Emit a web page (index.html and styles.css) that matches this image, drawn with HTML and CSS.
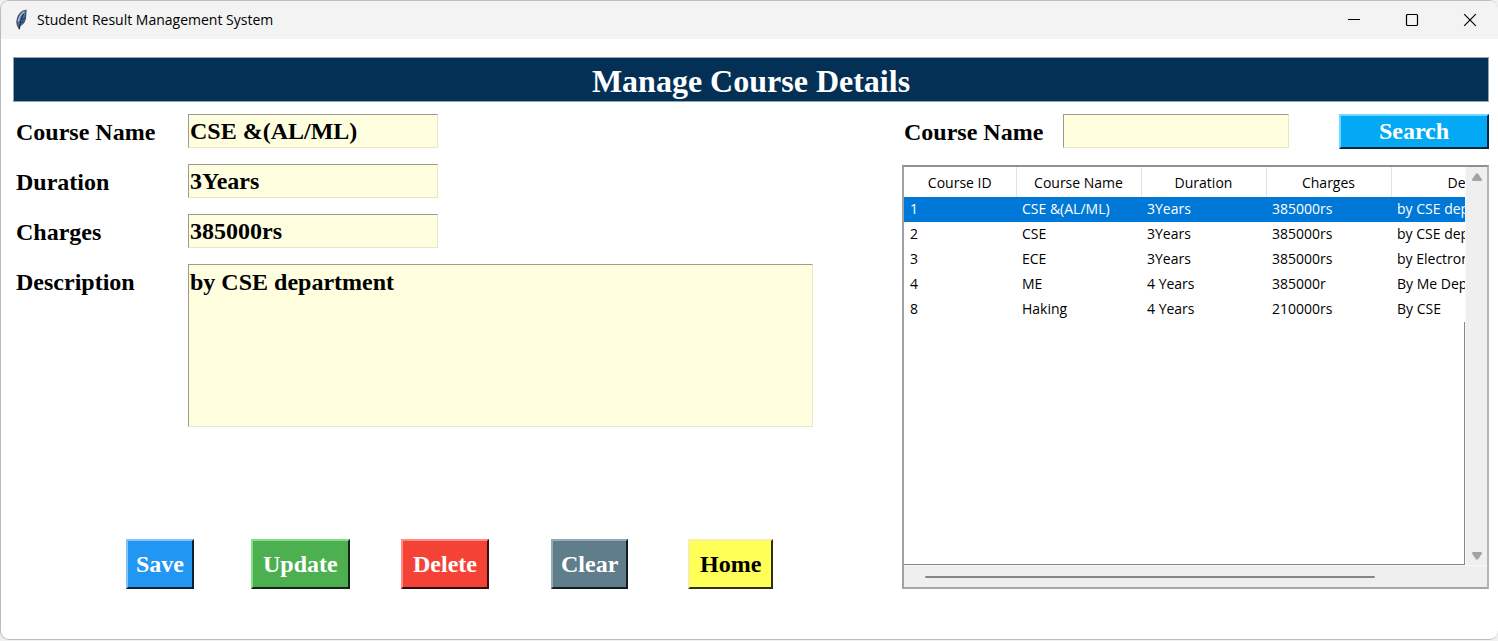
FILE: index.html
```html
<!DOCTYPE html>
<html lang="en">
<head>
<meta charset="utf-8">
<title>Student Result Management System</title>
<link rel="stylesheet" href="styles.css">
</head>
<body>
<div class="window">
  <header class="titlebar">
    <svg class="feather" viewBox="0 0 14 22" aria-hidden="true">
      <path d="M12 1.400C8 2 5 5 3.600 9c-1 3-1 5-.2 7.200L5.200 19.500 6.200 16.500c3-1.500 5-4.500 5.300-8z" fill="#3f76b8" stroke="#4a4f58" stroke-width="1.200"/>
      <path d="M10.500 2.800C7.200 4.500 5 8 4.400 12.500" fill="none" stroke="#b4cde8" stroke-width="1.200"/>
      <path d="M9.500 5C7.500 9 6 13 5.200 20M11 8.500L8 11M9.500 12L6.800 14" fill="none" stroke="#1d232c" stroke-width="1"/>
    </svg>
    <span class="caption">Student Result Management System</span>
    <div class="controls">
      <button class="control" type="button" aria-label="Minimize"><svg viewBox="0 0 14 14"><path d="M1 6.500h12"/></svg></button>
      <button class="control" type="button" aria-label="Maximize"><svg viewBox="0 0 14 14"><rect x="1.500" y="1.500" width="11" height="11" rx="1"/></svg></button>
      <button class="control" type="button" aria-label="Close"><svg viewBox="0 0 14 14"><path d="M1.200 1.200l11.600 11.600M12.800 1.200L1.200 12.800"/></svg></button>
    </div>
  </header>
  <h1 class="banner">Manage Course Details</h1>
  <main class="content">
    <form class="editor">
      <div class="fields">
        <label for="name">Course Name</label>
        <input class="entry" id="name" type="text" value="CSE &amp;(AL/ML)">
        <label for="duration">Duration</label>
        <input class="entry" id="duration" type="text" value="3Years">
        <label for="charges">Charges</label>
        <input class="entry" id="charges" type="text" value="385000rs">
        <label for="description">Description</label>
        <textarea class="entry notes" id="description">by CSE department</textarea>
      </div>
      <div class="actions">
        <button class="btn save" type="button">Save</button>
        <button class="btn wide update" type="button">Update</button>
        <button class="btn wide delete" type="button">Delete</button>
        <button class="btn clear" type="button">Clear</button>
        <button class="btn wide home" type="button">Home</button>
      </div>
    </form>
    <section class="browser">
      <form class="search">
        <label for="query">Course Name</label>
        <input class="entry" id="query" type="text">
        <button class="btn find" type="button">Search</button>
      </form>
      <div class="panel">
        <div class="view">
          <table class="courses">
            <colgroup><col class="col-id"><col class="col"><col class="col"><col class="col"><col class="col-wide"></colgroup>
            <thead><tr><th>Course ID</th><th>Course Name</th><th>Duration</th><th>Charges</th><th>Description</th></tr></thead>
            <tbody>
              <tr class="selected"><td>1</td><td>CSE &amp;(AL/ML)</td><td>3Years</td><td>385000rs</td><td>by CSE department</td></tr>
              <tr><td>2</td><td>CSE</td><td>3Years</td><td>385000rs</td><td>by CSE department</td></tr>
              <tr><td>3</td><td>ECE</td><td>3Years</td><td>385000rs</td><td>by Electronics</td></tr>
              <tr><td>4</td><td>ME</td><td>4 Years</td><td>385000r</td><td>By Me Department</td></tr>
              <tr><td>8</td><td>Haking</td><td>4 Years</td><td>210000rs</td><td>By CSE</td></tr>
            </tbody>
          </table>
          <div class="blank"></div>
        </div>
        <div class="vbar">
          <svg viewBox="0 0 12 8" aria-hidden="true"><path d="M5 .5h2L11 6.500 10.500 8h-9L1 6.500z"/></svg>
          <svg viewBox="0 0 12 8" aria-hidden="true"><path d="M1.500 0h9l.5 1.500L7 7.500H5L1 1.500z"/></svg>
        </div>
        <div class="hbar"><div class="thumb"></div></div>
      </div>
    </section>
  </main>
</div>
</body>
</html>
```
FILE: styles.css
```css
* { box-sizing: border-box; }

body {
  margin: 0;
  background: #f0f0f0;
  color: #000;
  font: bold 24px/34px "Liberation Serif", serif;
}

.window {
  display: flex;
  flex-direction: column;
  min-height: calc(100vh - 1px);
  border: 1px solid #bcbcbc;
  border-right: 0;
  border-radius: 9px;
  background: #fff;
  overflow: hidden;
}

.titlebar {
  display: flex;
  align-items: center;
  height: 38px;
  padding-left: 13px;
  background: #f3f3f3;
  font: 14px/20px "Open Sans", sans-serif;
}

.feather { width: 14px; height: 22px; margin-right: 9px; }
.controls { display: flex; margin-left: auto; }

.control {
  width: 58px;
  height: 38px;
  padding: 0 0 0 2px;
  border: 0;
  background: none;
}

.control svg {
  display: block;
  width: 14px;
  height: 14px;
  margin: 0 auto;
  fill: none;
  stroke: #000;
  stroke-width: 1.2;
}

.banner {
  height: 45px;
  margin: 18px 9px 12px 12px;
  border: 1px solid #8fa3b5;
  background: #033054;
  color: #fff;
  font-size: 32px;
  line-height: 46px;
  text-align: center;
}

.content {
  display: grid;
  flex: 1;
  grid-template-columns: 148fr 98fr;
  padding: 0 9px 50px 12px;
}

.editor {
  display: flex;
  flex-direction: column;
  justify-content: space-between;
}

.fields {
  display: grid;
  grid-template-columns: 175px 1fr;
  row-gap: 16px;
}

label { padding: 1px 0 0 3px; line-height: 34px; }
.fields label { height: 34px; }

.entry {
  width: 250px;
  height: 34px;
  padding: 0 1px;
  border: 1px solid;
  border-color: #9c9c8c #e8e8c8 #e8e8c8 #9c9c8c;
  border-radius: 0;
  outline: 0;
  background: #ffffe0;
  color: #000;
  font: inherit;
}

.notes {
  display: block;
  width: 625px;
  height: 163px;
  resize: none;
}

.actions {
  display: grid;
  grid-template-columns: 125px 150px 150px 137px auto;
  justify-items: start;
  padding-left: 113px;
}

.btn {
  height: 50px;
  padding: 0 8px;
  border: 2px solid;
  color: #fff;
  font: inherit;
}

.wide { padding: 0 10px; }

.save { border-color: #7fc4ff #10202e #10202e #7fc4ff; background: #2196f3; }
.update { border-color: #80e084 #152417 #152417 #80e084; background: #4caf50; }
.delete { border-color: #ff8c84 #30110f #30110f #ff8c84; background: #f44336; }
.clear { border-color: #93abb6 #161c1f #161c1f #93abb6; background: #607d8b; }
.home { border-color: #f2f2a0 #30301a #30301a #f2f2a0; background: #ffff57; color: #000; }

.browser {
  display: flex;
  flex-direction: column;
  gap: 16px;
  min-width: 0;
}

.search { display: flex; }
.search label { flex: 0 0 162px; }
.search .entry { width: 226px; }

.find {
  width: 150px;
  height: 35px;
  margin-left: auto;
  border-color: #6fd6ff #06283a #06283a #6fd6ff;
  background: #03a9f4;
  line-height: 31px;
}

.panel {
  display: grid;
  flex: 1;
  grid-template: 1fr 21px / 1fr 21px;
  gap: 1px;
  margin-left: 1px;
  border: 2px solid;
  border-color: #8f9096 #b5b5b5 #a8a8a8 #a0a0a4;
  background: #f8f8f8;
}

.view {
  display: flex;
  flex-direction: column;
  min-width: 0;
  border-bottom: 1px solid #828790;
  background: #fff;
  overflow: hidden;
}

.blank { flex: 1; border-right: 1px solid #828790; }

.courses {
  width: 675px;
  border-collapse: collapse;
  table-layout: fixed;
  font: 14px/23px "Open Sans", sans-serif;
}

.col-id { width: 112px; }
.col { width: 125px; }
.col-wide { width: 188px; }

.courses th {
  height: 30px;
  padding: 0;
  border-right: 1px solid #e5e5e5;
  font-weight: normal;
}

.courses td { height: 25px; padding: 0 5px 2px 6px; white-space: nowrap; }
.selected { background: #0078d7; color: #fff; }

.vbar {
  display: flex;
  flex-direction: column;
  align-items: center;
  justify-content: space-between;
  padding: 6px 0 5px;
  background: #efefef;
}

.vbar svg { width: 12px; height: 8px; fill: #a3a3a3; }

.hbar {
  display: flex;
  grid-column: 1 / -1;
  align-items: center;
  padding-left: 21px;
  background: #efefef;
}

.thumb { width: 80%; height: 2px; border-radius: 1px; background: #868686; }
```
